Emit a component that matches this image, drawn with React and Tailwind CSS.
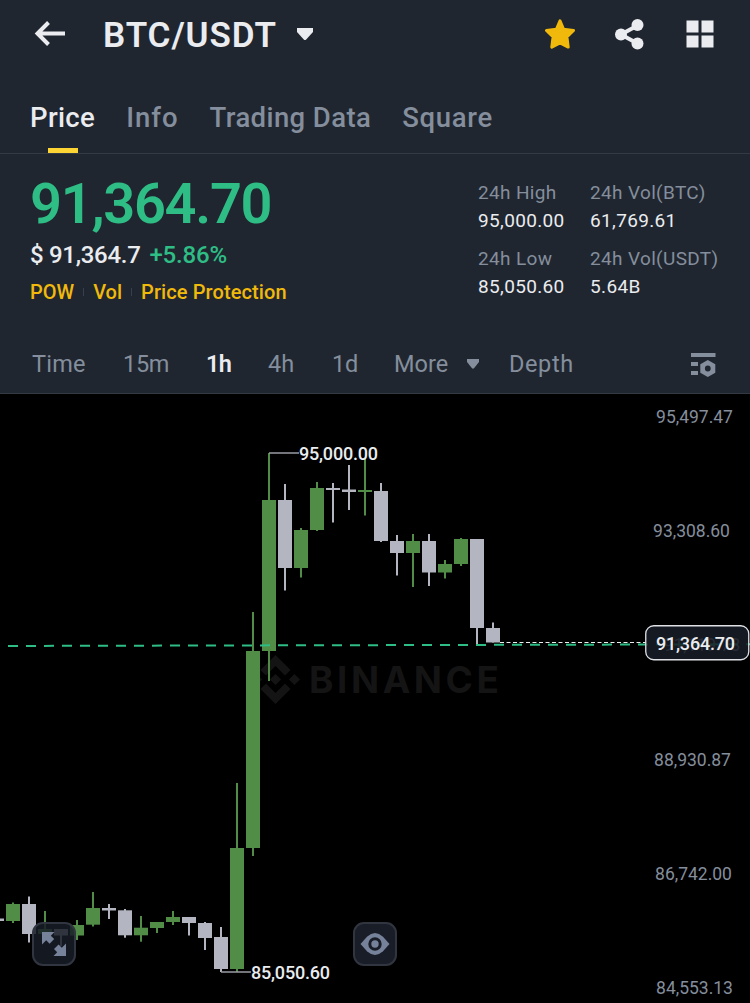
import React, { useState } from "react";

const TABS = [
  { name: "Price", tracking: "tracking-[0.35px]" },
  { name: "Info", tracking: "tracking-[1px]" },
  { name: "Trading Data", tracking: "tracking-[0.4px]" },
  { name: "Square", tracking: "tracking-[0.7px]" },
];

const STATS = [
  { label: "24h High", value: "95,000.00" },
  { label: "24h Vol(BTC)", value: "61,769.61" },
  { label: "24h Low", value: "85,050.60" },
  { label: "24h Vol(USDT)", value: "5.64B" },
];

const AXIS = [
  { x: 694.5, y: 417, text: "95,497.47" },
  { x: 691.5, y: 531, text: "93,308.60" },
  { x: 702, y: 645, text: "91,119.73" },
  { x: 692.5, y: 760, text: "88,930.87" },
  { x: 693.5, y: 874, text: "86,742.00" },
  { x: 694.5, y: 988, text: "84,553.13" },
];

// [up, wick top, body top, body bottom, wick bottom], one every 16px
const CANDLES = [
  [0, 918.5, 918.5, 921, 921],
  [1, 902.5, 904, 921, 923],
  [0, 896.5, 904, 934, 942.5],
  [1, 911, 929, 934, 934],
  [0, 929, 929, 935.5, 946],
  [1, 920, 925, 935.5, 940],
  [1, 892, 908, 924.7, 926.5],
  [0, 904, 908, 910.5, 919],
  [0, 909, 910.3, 935.3, 937.7],
  [1, 916, 927.7, 935.3, 941.7],
  [1, 922, 922, 928, 933],
  [1, 911, 917, 922, 925],
  [0, 917, 917, 923, 935.5],
  [0, 922, 923, 938, 950],
  [0, 927, 937, 969, 972],
  [1, 783, 848, 969, 972],
  [1, 612, 651, 848, 856],
  [1, 453, 500, 651, 681],
  [0, 484, 500, 568, 590.5],
  [1, 528, 530, 568, 577.5],
  [1, 482, 488, 530, 531],
  [0, 483, 488, 490, 522.5],
  [0, 465, 489.5, 492, 510],
  [1, 458, 490, 492, 515.5],
  [0, 483, 491, 541, 542],
  [0, 535, 541, 553, 575.5],
  [1, 534, 541, 553, 587],
  [0, 534, 541, 572.5, 586],
  [1, 560, 564, 572.5, 578.5],
  [1, 538, 539, 564, 566],
  [0, 539, 539, 628, 644],
  [0, 622.5, 628, 642.5, 642.5],
];

export default function App() {
  const [tab, setTab] = useState("Price");

  return (
    <div className="w-[750px] h-[1003px] overflow-hidden flex flex-col bg-black font-['Roboto','Liberation_Sans',sans-serif] text-[#eaecef]">
      <div className="h-[394px] shrink-0 bg-[#202630] border-b border-[#343a44] flex flex-col">
        <Header />

        {/* Tabs */}
        <div className="h-[85px] shrink-0 flex pl-[30px] gap-[31px] border-b border-[#343a44] text-[27.5px] font-medium leading-none">
          {TABS.map((t) => (
            <button
              key={t.name}
              onClick={() => setTab(t.name)}
              className={`h-full flex flex-col items-center justify-between pt-[35px] whitespace-nowrap ${t.tracking} ${tab === t.name ? "text-[#eaecef]" : "text-[#848e9c]"}`}
            >
              <span>{t.name}</span>
              {tab === t.name && <span className="w-[30px] h-[5px] bg-[#fcd535]" />}
            </button>
          ))}
        </div>

        <Summary />
        <Intervals />
      </div>

      <div className="relative h-[609px]">
        <Chart />
        <button className="absolute left-8 top-[528px] size-11 rounded-[11px] border-2 border-[#30353f] bg-[#181d27]/85 flex items-center justify-center">
          <svg width="24" height="24" viewBox="0 0 24 24" fill="#76819a">
            <path d="M0 0h12.500L8.800 3.700l3.400 3.400-4.600 4.600-3.400-3.400L0 12.500z" />
            <path d="M24 24H11.500l3.700-3.700-3.200-3.200 4.600-4.600 3.200 3.200L24 11.500z" />
          </svg>
        </button>
        <button className="absolute left-[353px] top-[528px] size-11 rounded-[11px] border-2 border-[#30353f] bg-[#181d27] flex items-center justify-center">
          <svg width="30" height="22" viewBox="0 0 30 22">
            <path d="M.5 11L7 3.800Q15-3.600 23 3.800L29.500 11 23 18.200Q15 25.600 7 18.200z" fill="#76819a" />
            <circle cx="15" cy="11" r="5.200" fill="#76819a" stroke="#181d27" strokeWidth="3" />
          </svg>
        </button>
      </div>
    </div>
  );
}

/* ------------- Top bar ------------- */
function Header() {
  return (
    <div className="h-[67px] mb-0.5 shrink-0 flex items-center pl-[34px] pr-9">
      <svg width="32" height="26" viewBox="0 0 32 26" fill="none" stroke="#eaecef" strokeWidth="4">
        <path d="M3 12.500H31M14.500 1.500L3.500 12.500l11 11" />
      </svg>
      <h1 className="ml-[37px] mt-[3px] text-[35px] leading-none font-semibold tracking-[0.9px]">BTC/USDT</h1>
      <svg className="ml-5" width="16" height="12" viewBox="0 0 16 12" fill="#eaecef">
        <path d="M0 0h16v4L9.200 11.500Q8 12.500 6.800 11.500L0 4z" />
      </svg>

      <div className="ml-auto flex items-center mt-px">
        <svg width="30" height="30" viewBox="0 0 30 30" fill="#f0b90b" stroke="#f0b90b" strokeWidth="3" strokeLinejoin="round">
          <path d="M15 1.800l3.600 8.500 9.900 1.200-6.600 6.300 1.300 10.300-8.200-4.100-8.200 4.100 1.300-10.300-6.600-6.300 9.900-1.200z" />
        </svg>
        <svg className="ml-10" width="29" height="31" viewBox="0 0 29 31" fill="#eaecef">
          <path d="M22.500 6.500L6 15.500l16.500 9" fill="none" stroke="#eaecef" strokeWidth="4" />
          <circle cx="6" cy="15.500" r="6" />
          <circle cx="22.500" cy="6" r="6" />
          <circle cx="22.500" cy="24.500" r="6" />
        </svg>
        <svg className="ml-[42px]" width="28" height="28" viewBox="0 0 28 28" fill="#eaecef">
          <path d="M.5.500h12v12H.500zM15.500.500h12v12h-12zM.500 15.500h12v12H.500zM15.500 15.500h12v12h-12z" />
        </svg>
      </div>
    </div>
  );
}

/* ------------- Last price + 24h stats ------------- */
function Summary() {
  return (
    <div className="h-[182px] shrink-0 flex pl-[30px] leading-none whitespace-nowrap">
      <div className="w-[448px] pt-[21px]">
        <div className="text-[56px] leading-[58px] font-semibold text-[#2ebd85] tracking-[-1.3px]">91,364.70</div>
        <div className="mt-2 flex gap-[9px] text-[24px] leading-7 font-medium">
          <span className="tracking-[-0.3px]">$ 91,364.7</span>
          <span className="text-[#2ebd85] tracking-[-0.2px]">+5.86%</span>
        </div>
        <div className="mt-[11px] flex items-center text-[20px] leading-6 font-medium text-[#f0b90b]">
          <span>POW</span>
          <span className="mx-[9px] w-px h-2 bg-[#3a404b]" />
          <span>Vol</span>
          <span className="mx-[9px] w-px h-2 bg-[#3a404b]" />
          <span className="tracking-[0.1px]">Price Protection</span>
        </div>
      </div>
      <div className="pt-[27px] grid grid-cols-[112px_auto] auto-rows-[66px]">
        {STATS.map((s) => (
          <div key={s.label} className="flex flex-col gap-1 text-[19px] leading-6">
            <span className="text-[#848e9c] tracking-[0.35px]">{s.label}</span>
            <span className="tracking-[0.35px]">{s.value}</span>
          </div>
        ))}
      </div>
    </div>
  );
}

/* ------------- Interval selector ------------- */
function Intervals() {
  return (
    <div className="h-[57px] shrink-0 flex items-center pt-px pl-8 pr-[34px] text-[23.5px] leading-none text-[#848e9c]">
      <span className="w-[91px] tracking-[0.2px]">Time</span>
      <span className="w-[83px] tracking-[-0.3px]">15m</span>
      <span className="w-[62px] font-semibold text-[#eaecef] tracking-[-0.8px]">1h</span>
      <span className="w-[64px]">4h</span>
      <span className="w-[62px] tracking-[-0.3px]">1d</span>
      <span className="w-[73px]">More</span>
      <svg className="-mt-[3px]" width="12" height="10" viewBox="0 0 12 10" fill="#848e9c">
        <path d="M0 0h12v3L7 9.300Q6 10 5 9.300L0 3z" />
      </svg>
      <span className="ml-[30px] tracking-[0.6px]">Depth</span>
      <svg className="ml-auto" width="25" height="24" viewBox="0 0 25 24" fill="#848e9c">
        <path d="M0 0h24.500v4H0zM0 9h7v4H0zM0 18h7v4H0z" />
        <path
          fillRule="evenodd"
          d="M16.800 7l7.500 4.200v8.600L16.800 24l-7.500-4.200v-8.600zM16.800 12.600a2.900 2.900 0 100 5.800 2.900 2.900 0 000-5.800z"
        />
      </svg>
    </div>
  );
}

/* ------------- Candlestick chart ------------- */
function Chart() {
  return (
    <svg className="block" width="750" height="609" viewBox="0 394 750 609">
      {/* Watermark */}
      <g fill="#141414">
        <g transform="translate(251 655) scale(.387)">
          <path d="M38.730 53.200l24.590-24.580 24.600 24.600 14.300-14.310L63.320 0l-38.900 38.900z" />
          <path d="M0 63.310L14.300 49l14.310 14.310-14.310 14.300z" />
          <path d="M38.730 73.410L63.320 98l24.600-24.600 14.310 14.290-38.900 38.910-38.910-38.880z" />
          <path d="M98 63.310L112.300 49l14.310 14.300-14.310 14.320z" />
          <path d="M77.830 63.300L63.320 48.780 48.780 63.300l14.540 14.530z" />
        </g>
        <text x="309" y="693" textLength="190" className="font-['Inter',sans-serif] text-[37px] font-bold">BINANCE</text>
      </g>

      {AXIS.map((a) => (
        <text key={a.y} x={a.x} y={a.y + 6} textAnchor="middle" fill="#848e9c" className="text-[17.5px]">
          {a.text}
        </text>
      ))}

      {CANDLES.map(([up, high, top, bottom, low], i) => {
        const x = i * 16 - 10;
        return (
          <g key={i} fill={up ? "#518d46" : "#b3b5c0"}>
            <rect x={x + 6} y={high} width="2" height={low - high} />
            <rect x={x} y={top} width="14" height={bottom - top} />
          </g>
        );
      })}

      {/* High / low markers */}
      <path d="M269 453h30M221 972h30" stroke="#9a9ca3" strokeWidth="1.500" />
      <g fill="#eaecef" className="text-[18px] font-medium">
        <text x="299" y="460" textLength="79">95,000.00</text>
        <text x="251" y="979" textLength="79">85,050.60</text>
      </g>

      {/* Price lines */}
      <path d="M-10 646L750 644.300" stroke="#2ebd85" strokeWidth="2" strokeDasharray="10 8" />
      <path d="M500 642.500H646" stroke="#eaecef" strokeWidth="1" strokeDasharray="4 2.500" />

      <rect x="645.750" y="625.750" width="103" height="34" rx="8" fill="#181d27" fillOpacity=".86" stroke="#dfe1e6" strokeWidth="1.300" />
      <text x="656" y="650" textLength="79" fill="#eaecef" className="text-[18px] font-medium">91,364.70</text>
    </svg>
  );
}
